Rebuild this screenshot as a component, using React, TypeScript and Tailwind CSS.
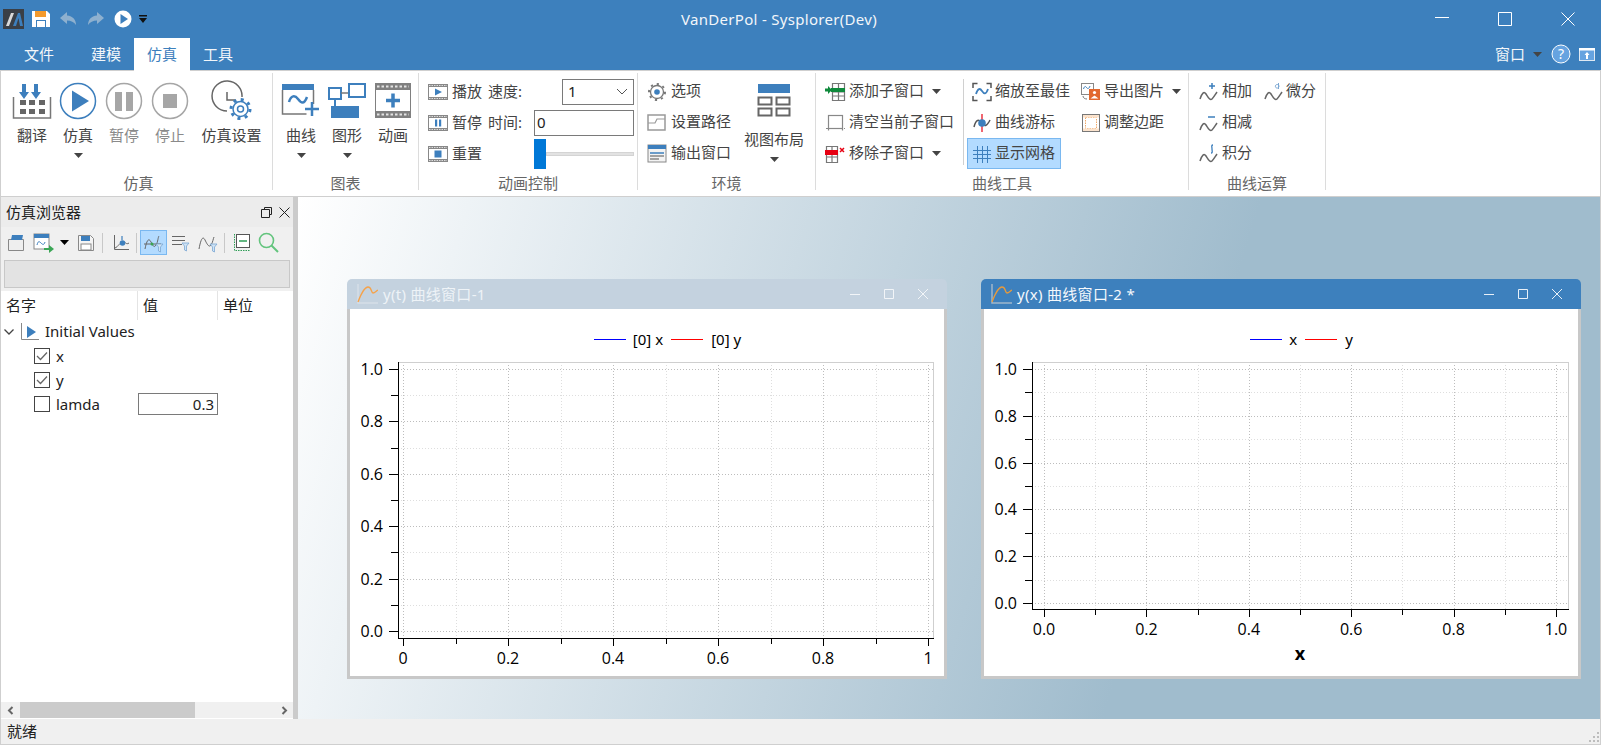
import type { ReactNode } from 'react'

const BLUE = '#3d7fbd'

function Ico({ s = 20, w, h, children }: { s?: number; w?: number; h?: number; children: ReactNode }) {
  const ww = w ?? s
  const hh = h ?? s
  return (
    <svg width={ww} height={hh} viewBox={`0 0 ${ww} ${hh}`} fill="none" className="shrink-0 block">
      {children}
    </svg>
  )
}

function Caret({ color = '#444' }: { color?: string }) {
  return (
    <svg width="9" height="5" viewBox="0 0 9 5" className="shrink-0 block">
      <path d="M0 0h9L4.5 5z" fill={color} />
    </svg>
  )
}

/* ---------- big ribbon icons ---------- */
const TranslateIcon = () => (
  <Ico s={40}>
    <path d="M1.5 16v21h37V16" stroke="#777" strokeWidth="1.5" />
    <path d="M14 3v8h3l-5 7-5-7h3V3zM26 3v8h3l-5 7-5-7h3V3z" fill={BLUE} />
    {[8, 17, 27].map((x) =>
      [19, 28].map((y) => <rect key={`${x}-${y}`} x={x} y={y} width="6" height="5" fill="#666" />),
    )}
  </Ico>
)

const PlayIcon = () => (
  <Ico s={40}>
    <circle cx="20" cy="20" r="17.5" stroke={BLUE} strokeWidth="1.5" />
    <path d="M14 9.5 31 20 14 30.5z" fill={BLUE} />
  </Ico>
)

const PauseIcon = () => (
  <Ico s={40}>
    <circle cx="20" cy="20" r="17.5" stroke="#a6a6a6" strokeWidth="1.5" />
    <rect x="11" y="11" width="7" height="19" fill="#a6a6a6" />
    <rect x="22" y="11" width="7" height="19" fill="#a6a6a6" />
  </Ico>
)

const StopIcon = () => (
  <Ico s={40}>
    <circle cx="20" cy="20" r="17.5" stroke="#a6a6a6" strokeWidth="1.5" />
    <rect x="13" y="13" width="14" height="14" fill="#a6a6a6" />
  </Ico>
)

const SimSettingsIcon = () => (
  <Ico s={42}>
    <path d="M31 17A15 15 0 1 0 16 31" stroke="#666" strokeWidth="1.5" />
    <path d="M16 12v8h8.500" stroke="#666" strokeWidth="1.5" />
    <circle cx="29.500" cy="29" r="7.500" fill="#fff" stroke={BLUE} strokeWidth="1.5" />
    <circle cx="29.500" cy="29" r="9.500" stroke={BLUE} strokeWidth="3" strokeDasharray="3 4.45" />
    <circle cx="29.500" cy="29" r="3" fill="#fff" stroke={BLUE} strokeWidth="1.5" />
  </Ico>
)

const CurveIcon = () => (
  <Ico s={40}>
    <rect x="1" y="3" width="32" height="6" fill={BLUE} />
    <path d="M1.500 9v24h24M32.500 9v14" stroke="#777" strokeWidth="1.5" />
    <path d="M8 21c2-7 6-7 9-3s6 6 9-2" stroke={BLUE} strokeWidth="2.5" />
    <path d="M31 21v14M24 28h14" stroke={BLUE} strokeWidth="2.5" />
  </Ico>
)

const ShapeIcon = () => (
  <Ico s={42}>
    <rect x="3" y="8" width="12" height="11" stroke={BLUE} strokeWidth="2" fill="#fff" />
    <rect x="23" y="4" width="16" height="13" stroke={BLUE} strokeWidth="2" fill="#fff" />
    <path d="M15 13h7" stroke="#777" strokeWidth="1.5" />
    <path d="M9 19v7" stroke={BLUE} strokeWidth="2" />
    <rect x="5" y="26" width="28" height="12" fill={BLUE} />
  </Ico>
)

const AnimIcon = () => (
  <Ico s={40}>
    <rect x="2" y="2" width="36" height="35" fill="#808080" />
    <rect x="3" y="9" width="34" height="21" fill="#fff" />
    <path d="M4 5.500h32M4 33.500h32" stroke="#e4e4e4" strokeWidth="2" strokeDasharray="2.5 2" />
    <path d="M20 12.500v14M13 19.500h14" stroke={BLUE} strokeWidth="3.5" />
  </Ico>
)

const LayoutIcon = () => (
  <Ico w={34} h={34}>
    <rect x="1" y="0" width="32" height="9" fill={BLUE} />
    <path d="M1.500 13.500h13v7h-13zM19.500 13.500h13v7h-13zM1.500 24.500h13v7h-13zM19.500 24.500h13v7h-13z" stroke="#666" strokeWidth="2" />
  </Ico>
)

/* ---------- small ribbon icons ---------- */
const Film = ({ children }: { children: ReactNode }) => (
  <Ico w={20} h={18}>
    <rect x="0" y="1" width="20" height="16" fill="#888" />
    <rect x="1" y="4" width="18" height="10" fill="#fff" />
    <path d="M1 2.500h18M1 15.500h18" stroke="#ddd" strokeWidth="1" strokeDasharray="1.5 1" />
    {children}
  </Ico>
)

const FilmPlay = () => <Film><path d="M7 5.500 14 9l-7 3.500z" fill={BLUE} /></Film>
const FilmPause = () => <Film><path d="M7 5.500h2.200v7H7zM11 5.500h2.200v7H11z" fill={BLUE} /></Film>
const FilmStop = () => <Film><rect x="6.500" y="5.500" width="7" height="7" fill={BLUE} /></Film>

const OptionIcon = () => (
  <Ico>
    <circle cx="10" cy="10" r="6.500" stroke="#777" strokeWidth="1.3" />
    <circle cx="10" cy="10" r="8" stroke="#777" strokeWidth="2" strokeDasharray="2.2 4" />
    <circle cx="10" cy="10" r="2.800" fill={BLUE} />
  </Ico>
)

const PathIcon = () => (
  <Ico>
    <rect x="1" y="2" width="17" height="15" stroke="#999" strokeWidth="1.5" />
    <path d="M1 10h7l2-4h8" stroke="#999" strokeWidth="1.2" />
  </Ico>
)

const OutputIcon = () => (
  <Ico>
    <rect x="1" y="1" width="18" height="17" fill="#f3f3f3" stroke="#888" />
    <rect x="1" y="1" width="18" height="4" fill={BLUE} />
    <path d="M3 9h14" stroke={BLUE} strokeWidth="1.5" />
    <path d="M3 12h14M3 15h9" stroke="#888" strokeWidth="1.5" />
  </Ico>
)

const AddWinIcon = () => (
  <Ico w={21} h={20}>
    <path d="M7.500 1.500h12v17h-12zM13.500 1.500v17M7.500 10h12M7.500 14h12" stroke="#777" strokeWidth="1.2" />
    <rect x="6" y="6" width="14" height="4" fill="#0f8a3c" />
    <path d="M0 6.500h3V4l4 4-4 4V9.500H0z" fill="#0f8a3c" />
  </Ico>
)

const ClearWinIcon = () => (
  <Ico w={21} h={20}>
    <rect x="3.500" y="2.500" width="14" height="13" stroke="#888" strokeWidth="1.2" />
    <path d="M1 15.500h19M3.500 15.500v3M17.500 15.500v3" stroke="#888" strokeWidth="1.2" strokeDasharray="2 1" />
  </Ico>
)

const RemoveWinIcon = () => (
  <Ico w={21} h={20}>
    <path d="M1.500 2.500h11v16h-11zM7 2.500v16M1.500 13h11" stroke="#777" strokeWidth="1.2" />
    <rect x="0" y="6" width="13" height="5" fill="#e60012" />
    <path d="m15 4 4 4m0-4-4 4" stroke="#e60012" strokeWidth="1.5" />
  </Ico>
)

const ZoomFitIcon = () => (
  <Ico>
    <path d="M1 6V1.500h4.500M14.500 1.500H19V6M19 14v4.500h-4.500M5.500 18.500H1V14" stroke="#555" strokeWidth="1.5" />
    <path d="M4 12c2-6 4-6 6-3s4 4 6-2" stroke={BLUE} strokeWidth="1.8" />
  </Ico>
)

const CursorIcon = () => (
  <Ico>
    <path d="M2 14C4 6 7 6 10 10s5 3 8-3" stroke="#555" strokeWidth="1.5" />
    <path d="M10 1v18" stroke="#e60012" strokeWidth="1.2" />
    <circle cx="10" cy="10" r="3.800" fill={BLUE} />
  </Ico>
)

const GridIcon = () => (
  <Ico>
    <path d="M5.500 2v17M10.500 2v17M15.500 2v17M1 6.500h18M1 10.500h18M1 14.500h18" stroke={BLUE} strokeWidth="1" />
  </Ico>
)

const ExportImgIcon = () => (
  <Ico>
    <rect x="0.500" y="1.500" width="12" height="11" fill="#fff" stroke="#888" />
    <path d="M2.500 7c1-3 2-3 3-1.500S8 7 9 4" stroke={BLUE} />
    <rect x="8" y="7" width="11" height="11" fill="#e2682f" />
    <circle cx="13.500" cy="10.500" r="1.600" fill="#fff" />
    <path d="M9.500 16.500h8l-4-3z" fill="#fff" />
    <path d="M2 14c0 2 2 3 4 3" stroke="#777" />
  </Ico>
)

const MarginIcon = () => (
  <Ico>
    <rect x="1.500" y="1.500" width="17" height="17" stroke="#777" />
    <rect x="4.500" y="4.500" width="11" height="11" stroke="#f0a868" strokeDasharray="1.5 1" />
    <rect x="2" y="2" width="16" height="2.500" fill="#fbe3cd" />
    <rect x="2" y="15.500" width="16" height="2.500" fill="#fbe3cd" />
  </Ico>
)

const Wave = ({ mark }: { mark: ReactNode }) => (
  <Ico>
    <path d="M1 17c2-6 4-8 6-5s4 7 6 5 3-4 5-7" stroke="#666" strokeWidth="1.5" />
    {mark}
  </Ico>
)

const AddOp = () => <Wave mark={<path d="M10 4h6M13 1v6" stroke={BLUE} strokeWidth="1.5" />} />
const SubOp = () => <Wave mark={<path d="M9 4h7" stroke={BLUE} strokeWidth="1.5" />} />
const IntOp = () => <Wave mark={<path d="M14 1c-2 0-1 2-1 4s1 4-1 4" stroke={BLUE} strokeWidth="1.3" />} />
const DiffOp = () => (
  <Wave mark={<path d="M14.500 1v6M14.500 5.500a1.800 1.800 0 1 0-.1.1" stroke="#7ba7d3" strokeWidth="1" />} />
)

/* ---------- ribbon parts ---------- */
function BigBtn({ icon, label, wide, caret, muted }: { icon: ReactNode; label: string; wide?: boolean; caret?: boolean; muted?: boolean }) {
  return (
    <div className={`flex flex-col items-center pt-[9px] ${wide ? 'w-[77px]' : 'w-[46px]'}`}>
      <div className="h-[42px] flex items-center justify-center">{icon}</div>
      <div className={`h-[20px] mt-[3px] leading-[20px] whitespace-nowrap ${muted ? 'text-[#8a8a8a]' : 'text-[#444]'}`}>{label}</div>
      {caret && <div className="mt-[8px]"><Caret /></div>}
    </div>
  )
}

function Group({ label, width, labelClass, children }: { label: string; width: string; labelClass?: string; children: ReactNode }) {
  return (
    <div className={`relative flex flex-col h-full shrink-0 ${width}`}>
      <div className="flex-1 min-h-0 flex">{children}</div>
      <div className={`h-[24px] leading-[22px] text-center text-[#666] ${labelClass ?? 'pr-[1px]'}`}>{label}</div>
      <div className="absolute right-0 top-[2px] bottom-[6px] w-px bg-[#dcdcdc]" />
    </div>
  )
}

function SmallBtn({ icon, label, caretGap, active, iconGap = 3, w }: { icon: ReactNode; label: string; caretGap?: string; active?: boolean; iconGap?: number; w?: string }) {
  return (
    <div className={`h-[31px] flex items-center whitespace-nowrap text-[#444] ${active ? 'bg-[#b3dbff] border border-[#7ab8f0] pl-[4px]' : ''} ${w ?? ''}`}>
      {icon}
      <span className="mb-[2px]" style={{ marginLeft: iconGap }}>{label}</span>
      {caretGap && <span className={caretGap}><Caret /></span>}
    </div>
  )
}

/* ---------- chart ---------- */
type ChartCfg = {
  vb: string
  axL: number
  axT: number
  axB: number
  axR: number
  x0: number
  xk: number
  y0: number
  yk: number
  xLabels: string[]
}

function Chart({ cfg, xTitle }: { cfg: ChartCfg; xTitle?: string }) {
  const { axL, axT, axB, axR, x0, xk, y0, yk, xLabels } = cfg
  const tenths = [0, 1, 2, 3, 4, 5, 6, 7, 8, 9, 10]
  return (
    <svg width="594" height="367" viewBox={cfg.vb} className="block" fontFamily="'Open Sans', sans-serif">
      {tenths.map((t) => {
        const major = t % 2 === 0
        const x = Math.round(x0 + (t / 10) * xk) + 0.5
        const y = Math.round(y0 - (t / 10) * yk) + 0.5
        const stroke = major ? '#bdbdbd' : '#dedede'
        return (
          <g key={t} shapeRendering="crispEdges">
            <line x1={x} x2={x} y1={axT} y2={axB} stroke={stroke} strokeDasharray="1 2" />
            <line x1={axL} x2={axR} y1={y} y2={y} stroke={stroke} strokeDasharray="1 2" />
            <line x1={x} x2={x} y1={axB} y2={axB + (major ? 8 : 6)} stroke="#000" />
            <line x1={axL - (major ? 9 : 7)} x2={axL} y1={y} y2={y} stroke="#000" />
          </g>
        )
      })}
      <g shapeRendering="crispEdges">
        <line x1={axL} x2={axR} y1={axT + 0.5} y2={axT + 0.5} stroke="#cfcfcf" />
        <line x1={axR + 0.5} x2={axR + 0.5} y1={axT} y2={axB} stroke="#cfcfcf" />
        <line x1={axL + 0.5} x2={axL + 0.5} y1={axT} y2={axB + 1} stroke="#000" />
        <line x1={axL} x2={axR + 1} y1={axB + 0.5} y2={axB + 0.5} stroke="#000" />
      </g>
      {['0.0', '0.2', '0.4', '0.6', '0.8', '1.0'].map((t) => (
        <text key={t} x={axL - 15} y={y0 - parseFloat(t) * yk + 6} textAnchor="end" fontSize="16" fill="#000">{t}</text>
      ))}
      {xLabels.map((t, i) => (
        <text key={t} x={x0 + (i / 5) * xk} y={axB + 26} textAnchor="middle" fontSize="16" fill="#000">{t}</text>
      ))}
      {xTitle && (
        <text x={x0 + 0.5 * xk} y={660} textAnchor="middle" fontSize="18" fontWeight="700" fill="#000">{xTitle}</text>
      )}
    </svg>
  )
}

function PlotWindow({ left, active, title, legend, cfg, xTitle }: { left: string; active?: boolean; title: string; legend: { x: string; y: string }; cfg: ChartCfg; xTitle?: string }) {
  const stroke = active ? '#e8f0f8' : '#f2f5f8'
  return (
    <div className={`absolute top-[82px] w-[600px] h-[400px] flex flex-col ${left}`}>
      <div className={`h-[30px] rounded-t-[5px] flex items-center pl-[10px] shrink-0 ${active ? 'bg-[#3d80bd]' : 'bg-[#c4d2df]'}`}>
        <Ico w={21} h={20}>
          <path d="M1 0v19h20" stroke={active ? '#9fb6cc' : '#d5dee7'} strokeWidth="1.5" />
          <path d="M1 18C4 10 7 3 11 3s3 6 5 6 3-2 5-3" stroke={active ? '#e79a3c' : '#f5a24a'} strokeWidth="1.3" />
        </Ico>
        <span className={`ml-[5px] tracking-[0.3px] ${active ? 'text-[#f4f8fc]' : 'text-[#eef3f7]'}`}>{title}</span>
        <div className="ml-auto flex items-center pr-[18px] gap-[22px]">
          <svg width="12" height="12" viewBox="0 0 12 12" fill="none"><path d="M1 6.500h10" stroke={stroke} /></svg>
          <svg width="12" height="12" viewBox="0 0 12 12" fill="none"><path d="M1.500 1.500h9v9h-9z" stroke={stroke} /></svg>
          <svg width="12" height="12" viewBox="0 0 12 12" fill="none"><path d="m1 1 10 10m0-10L1 11" stroke={stroke} /></svg>
        </div>
      </div>
      <div className="flex-1 min-h-0 border-[3px] border-t-0 border-[#c8c8c8] bg-white flex flex-col relative">
        <div className="absolute top-[20px] left-0 right-0 pl-[41px] flex justify-center items-center text-black z-10 h-[20px]">
          <span className="w-[32px] h-[1px] bg-[#0000ff]" />
          <span className="ml-[7px] mr-[8px]">{legend.x}</span>
          <span className="w-[32px] h-[1px] bg-[#ff0000]" />
          <span className="ml-[8px]">{legend.y}</span>
        </div>
        <Chart cfg={cfg} xTitle={xTitle} />
      </div>
    </div>
  )
}

const chart1: ChartCfg = {
  vb: '350 309 594 367', axL: 398, axT: 362, axB: 638, axR: 933, x0: 403, xk: 525, y0: 631, yk: 262,
  xLabels: ['0', '0.2', '0.4', '0.6', '0.8', '1'],
}
const chart2: ChartCfg = {
  vb: '984 309 594 367', axL: 1032, axT: 362, axB: 609, axR: 1568, x0: 1044, xk: 512, y0: 603, yk: 234,
  xLabels: ['0.0', '0.2', '0.4', '0.6', '0.8', '1.0'],
}

/* ---------- left panel ---------- */
const Sep = () => <div className="w-px h-[20px] bg-[#c8c8c8] shrink-0" />

function FilterMark() {
  return <path d="M12 11h7l-2.500 3v5l-2-1v-4z" fill="#cfe3f5" stroke="#7ba7d3" strokeWidth=".8" />
}

function BrowserToolbar() {
  return (
    <div className="h-[31px] flex items-center pl-[6px] bg-[#f0f0f0] shrink-0">
      <Ico w={18} h={18}>
        <path d="M1.500 5.500h15v11h-15z" stroke="#888" fill="#eee" />
        <path d="M4 6 5 1h11l-1 5z" fill={BLUE} />
      </Ico>
      <div className="ml-[8px]">
        <Ico w={21} h={20}>
          <rect x="1" y="1" width="15" height="15" fill="#fff" stroke="#888" />
          <rect x="1" y="1" width="15" height="4" fill={BLUE} />
          <path d="M4 12c1-4 2-4 4-2s3 2 4-1" stroke={BLUE} />
          <path d="M11 15h5v-3l5 4-5 4v-3h-5z" fill="#3aa655" />
        </Ico>
      </div>
      <div className="ml-[6px]"><Caret color="#000" /></div>
      <div className="ml-[8px]">
        <Ico w={18} h={18}>
          <path d="M1.500 1.500h12l3 3v12h-15z" fill="#f4f4f4" stroke="#888" />
          <rect x="4" y="2" width="9" height="5" fill={BLUE} />
          <rect x="4" y="10" width="10" height="6" fill="#fff" stroke="#888" />
        </Ico>
      </div>
      <div className="ml-[7px]"><Sep /></div>
      <div className="ml-[8px]">
        <Ico w={18} h={18}>
          <path d="M3.500 1v14.500H18" stroke="#666" />
          <path d="M4 14c3-1 5-6 8-6s3 3 6 1" stroke="#666" />
          <path d="M11 2v4" stroke={BLUE} strokeWidth="1.2" />
          <circle cx="11.500" cy="9" r="2.800" fill={BLUE} />
        </Ico>
      </div>
      <div className="ml-[7px]"><Sep /></div>
      <div className="ml-[3px] w-[27px] h-[25px] bg-[#b3dbff] border border-[#7ab8f0] flex items-center justify-center shrink-0">
        <Ico w={20} h={20}>
          <path d="M1 16C3 6 5 5 7 9s3 6 5 3 2-8 3-9" stroke="#666" />
          <path d="M0 11h17" stroke="#666" />
          <circle cx="8" cy="11" r="1.500" fill="#3aa655" />
          <FilterMark />
        </Ico>
      </div>
      <div className="ml-[5px]">
        <Ico w={18} h={20}>
          <path d="M0 3.500h13M0 7.500h13M0 11.500h10" stroke="#666" />
          <g transform="translate(-2 -1)"><FilterMark /></g>
        </Ico>
      </div>
      <div className="ml-[8px]">
        <Ico w={20} h={20}>
          <path d="M1 16C3 5 5 3 7 7s4 8 6 5 2-6 3-8" stroke="#666" />
          <FilterMark />
        </Ico>
      </div>
      <div className="ml-[6px]"><Sep /></div>
      <div className="ml-[8px]">
        <Ico w={18} h={19}>
          <path d="M1.500 1v16.500H17" stroke="#2f9e57" strokeDasharray="1.5 1" />
          <rect x="3.500" y="1.500" width="13" height="13" fill="#fff" stroke="#555" />
          <path d="M6 8h8" stroke="#2f9e57" strokeWidth="1.5" />
        </Ico>
      </div>
      <div className="ml-[7px]">
        <Ico w={21} h={21}>
          <circle cx="8.500" cy="8.500" r="7" stroke="#63c47d" strokeWidth="1.6" />
          <path d="m13.500 13.500 6.500 6.500" stroke="#63c47d" strokeWidth="2" />
        </Ico>
      </div>
    </div>
  )
}

function CheckBox({ checked }: { checked?: boolean }) {
  return (
    <div className="w-[16px] h-[16px] border border-[#444] bg-white flex items-center justify-center shrink-0">
      {checked && (
        <svg width="12" height="10" viewBox="0 0 12 10" fill="none"><path d="m1 5 3.500 3.500L11 1.500" stroke="#666" strokeWidth="1.3" /></svg>
      )}
    </div>
  )
}

function VarRow({ name, checked, value }: { name: string; checked?: boolean; value?: string }) {
  return (
    <div className="h-[24px] flex items-center pl-[33px] relative">
      <CheckBox checked={checked} />
      <span className="ml-[6px] text-[#222]">{name}</span>
      {value && (
        <div className="absolute left-[137px] top-[1px] w-[80px] h-[22px] border border-[#7a7a7a] bg-white text-right pr-[3px] leading-[20px] text-[#222]">
          {value}
        </div>
      )}
    </div>
  )
}

function BrowserPanel() {
  return (
    <div className="w-[292px] flex flex-col shrink-0 bg-white">
      <div className="h-[30px] bg-[#ececec] flex items-center pl-[5px] pr-[3px] shrink-0 text-[#222]">
        <span>仿真浏览器</span>
        <div className="ml-auto flex items-center gap-[7px]">
          <svg width="11" height="11" viewBox="0 0 11 11" fill="none"><path d="M3.500 2.500v-2h7v7h-2M.5 2.500h8v8h-8z" stroke="#222" /></svg>
          <svg width="11" height="11" viewBox="0 0 11 11" fill="none"><path d="m.5.500 10 10m0-10-10 10" stroke="#222" /></svg>
        </div>
      </div>
      <BrowserToolbar />
      <div className="h-[33px] bg-[#f0f0f0] px-[3px] pt-[2px] shrink-0">
        <div className="h-[28px] bg-[#e3e3e3] border border-[#c8c8c8]" />
      </div>
      <div className="h-[29px] flex items-center text-[#222] shrink-0">
        <div className="w-[137px] pl-[5px] border-r border-[#e4e4e4] h-full flex items-center">名字</div>
        <div className="w-[80px] pl-[5px] border-r border-[#e4e4e4] h-full flex items-center">值</div>
        <div className="pl-[5px] h-full flex items-center">单位</div>
      </div>
      <div className="flex-1 min-h-0 -mt-[1px]">
        <div className="h-[25px] flex items-center pl-[3px]">
          <svg width="10" height="6" viewBox="0 0 10 6" fill="none"><path d="m.5.500 4.500 4.500L9.500.500" stroke="#444" strokeWidth="1.3" /></svg>
          <div className="ml-[7px]">
            <Ico w={18} h={18}>
              <path d="M.5 0v16.500H18" stroke="#888" />
              <path d="M6 3l9 6-9 6z" fill={BLUE} />
            </Ico>
          </div>
          <span className="ml-[6px] text-[#222]">Initial Values</span>
        </div>
        <VarRow name="x" checked />
        <VarRow name="y" checked />
        <VarRow name="lamda" value="0.3" />
      </div>
      <div className="h-[16px] bg-[#f0f0f0] flex items-center shrink-0 mb-[1px]">
        <div className="w-[19px] flex justify-center">
          <svg width="7" height="9" viewBox="0 0 7 9" fill="none"><path d="M5.500 1 2 4.500 5.500 8" stroke="#666" strokeWidth="2" /></svg>
        </div>
        <div className="w-[175px] h-full bg-[#cbcbcb]" />
        <div className="ml-auto w-[18px] flex justify-center">
          <svg width="7" height="9" viewBox="0 0 7 9" fill="none"><path d="M1.500 1 5 4.500 1.500 8" stroke="#666" strokeWidth="2" /></svg>
        </div>
      </div>
    </div>
  )
}

/* ---------- page ---------- */
export default function App() {
  return (
    <div className="w-[1601px] h-[745px] flex flex-col overflow-hidden bg-white text-[15px] leading-none [font-family:'Noto_Sans','Noto_Sans_CJK_SC',sans-serif]">
      {/* Title bar */}
      <div className="h-[38px] bg-[#3d80bd] flex items-center shrink-0 text-white">
        <div className="w-[681px] flex items-center pl-[3px] shrink-0">
          <svg width="21" height="20" viewBox="0 0 21 20" className="block">
            <rect width="21" height="20" fill="#3a3f46" />
            <path d="M3 17 8 4h3L6 17z" fill="#d9d9d9" />
            <path d="M10 17 15 4h2l3 13h-3l-1.500-8L13 17z" fill={BLUE} />
          </svg>
          <div className="ml-[7px]">
            <Ico w={20} h={18}>
              <path d="M1 1h15l3 3v13H1z" fill="#fff" />
              <rect x="4" y="1" width="11" height="6" fill="#f39a2d" />
              <rect x="5" y="10" width="10" height="7" fill="#3d80bd" />
              <rect x="6" y="11" width="8" height="6" fill="#fff" />
            </Ico>
          </div>
          <div className="ml-[8px]">
            <Ico w={19} h={16}>
              <path d="M8 1 1 7l7 6V9.500c4 0 7 1.500 9 4.500 0-5-3-9-9-9.500z" fill="#8eb0cf" />
            </Ico>
          </div>
          <div className="ml-[8px]">
            <Ico w={19} h={16}>
              <path d="m11 1 7 6-7 6V9.500c-4 0-7 1.500-9 4.500 0-5 3-9 9-9.500z" fill="#8eb0cf" />
            </Ico>
          </div>
          <div className="ml-[9px]">
            <Ico w={18} h={18}>
              <circle cx="9" cy="9" r="8.500" fill="#fff" />
              <path d="M6.500 4 14 9l-7.500 5z" fill={BLUE} />
            </Ico>
          </div>
          <div className="ml-[6px]">
            <svg width="10" height="10" viewBox="0 0 10 10" className="block"><path d="M1 1h8v1.500H1zM1 4h8L5 9z" fill="#111" /></svg>
          </div>
        </div>
        <span className="text-[#f2f6fa] tracking-[0.3px]">VanDerPol - Sysplorer(Dev)</span>
        <div className="ml-auto flex items-center">
          <svg width="14" height="14" viewBox="0 0 14 14" fill="none" className="mr-[49px]"><path d="M0 5.500h14" stroke="#fff" /></svg>
          <svg width="14" height="14" viewBox="0 0 14 14" fill="none" className="mr-[49px]"><path d="M.5.500h13v13H.5z" stroke="#fff" /></svg>
          <svg width="14" height="14" viewBox="0 0 14 14" fill="none" className="mr-[26px]"><path d="m.5.500 13 13m0-13-13 13" stroke="#fff" /></svg>
        </div>
      </div>

      {/* Tabs */}
      <div className="h-[32px] bg-[#3d80bd] flex items-stretch shrink-0 text-[#f2f6fa]">
        <div className="ml-[11px] w-[56px] flex items-center justify-center">文件</div>
        <div className="ml-[11px] w-[56px] flex items-center justify-center">建模</div>
        <div className="w-[56px] flex items-center justify-center bg-white text-[#3d80bd] h-[33px] relative z-10">仿真</div>
        <div className="w-[56px] flex items-center justify-center">工具</div>
        <div className="ml-auto flex items-center">
          <span>窗口</span>
          <div className="ml-[8px]"><Caret /></div>
          <svg width="20" height="20" viewBox="0 0 20 20" className="ml-[9px]">
            <circle cx="10" cy="10" r="9" fill="#66a3e0" stroke="#fff" />
            <text x="10" y="15" textAnchor="middle" fontSize="14" fill="#fff">?</text>
          </svg>
          <svg width="16" height="13" viewBox="0 0 16 13" className="ml-[8px] mr-[6px]">
            <rect x=".5" y=".5" width="15" height="12" fill="#66a3e0" stroke="#dfe9f3" />
            <rect x="0" y="0" width="16" height="2.500" fill="#fff" />
            <path d="M8 4 5.500 7H7v4h2V7h1.500z" fill="#fff" />
          </svg>
        </div>
      </div>

      {/* Ribbon */}
      <div className="h-[127px] border-y border-[#cfcfcf] border-l border-r flex shrink-0 text-[15px]">
        <Group label="仿真" width="w-[272px]" labelClass="pl-[3px]">
          <div className="flex pl-[8px]">
            <BigBtn icon={<TranslateIcon />} label="翻译" />
            <BigBtn icon={<PlayIcon />} label="仿真" caret />
            <BigBtn icon={<PauseIcon />} label="暂停" muted />
            <BigBtn icon={<StopIcon />} label="停止" muted />
            <BigBtn icon={<SimSettingsIcon />} label="仿真设置" wide />
          </div>
        </Group>
        <Group label="图表" width="w-[146px]">
          <div className="flex pl-[5px]">
            <BigBtn icon={<CurveIcon />} label="曲线" caret />
            <BigBtn icon={<ShapeIcon />} label="图形" caret />
            <BigBtn icon={<AnimIcon />} label="动画" />
          </div>
        </Group>
        <Group label="动画控制" width="w-[219px]">
          <div className="flex flex-col w-full pt-[5px] pl-[9px] pr-[4px] text-[#444]">
            <div className="h-[31px] flex items-center">
              <FilmPlay />
              <span className="ml-[4px] w-[30px] mb-[1px]">播放</span>
              <span className="ml-[6px] mb-[1px]">速度:</span>
              <div className="ml-auto w-[72px] h-[26px] border border-[#7a7a7a] flex items-center pl-[5px] pr-[5px] text-[#222]">
                <span>1</span>
                <svg width="12" height="7" viewBox="0 0 12 7" fill="none" className="ml-auto"><path d="m1 1 5 5 5-5" stroke="#555" /></svg>
              </div>
            </div>
            <div className="h-[31px] flex items-center">
              <FilmPause />
              <span className="ml-[4px] w-[30px] mb-[1px]">暂停</span>
              <span className="ml-[6px] mb-[1px]">时间:</span>
              <div className="ml-auto w-[100px] h-[26px] border border-[#7a7a7a] flex items-center pl-[2px] text-[#222]">0</div>
            </div>
            <div className="h-[31px] flex items-center">
              <FilmStop />
              <span className="ml-[4px] mb-[1px]">重置</span>
              <div className="ml-auto w-[100px] h-[30px] flex items-center">
                <div className="w-[12px] h-[30px] bg-[#0078d7] shrink-0" />
                <div className="flex-1 h-[4px] bg-[#e2e2e2] border border-[#d4d4d4]" />
              </div>
            </div>
          </div>
        </Group>
        <Group label="环境" width="w-[178px]">
          <div className="flex flex-col pt-[5px] pl-[9px] w-[110px] shrink-0">
            <SmallBtn icon={<OptionIcon />} label="选项" iconGap={4} />
            <SmallBtn icon={<PathIcon />} label="设置路径" iconGap={4} />
            <SmallBtn icon={<OutputIcon />} label="输出窗口" iconGap={4} />
          </div>
          <div className="flex flex-col items-center pt-[13px] w-[52px] shrink-0 text-[#444]">
            <LayoutIcon />
            <div className="mt-[11px] leading-[20px] whitespace-nowrap">视图布局</div>
            <div className="mt-[8px]"><Caret /></div>
          </div>
        </Group>
        <Group label="曲线工具" width="w-[373px]">
          <div className="flex flex-col pt-[5px] pl-[9px] w-[148px] shrink-0 relative">
            <SmallBtn icon={<AddWinIcon />} label="添加子窗口" caretGap="ml-[8px]" />
            <SmallBtn icon={<ClearWinIcon />} label="清空当前子窗口" />
            <SmallBtn icon={<RemoveWinIcon />} label="移除子窗口" caretGap="ml-[8px]" />
            <div className="absolute right-0 top-[8px] h-[86px] w-px bg-[#d0d0d0]" />
          </div>
          <div className="flex flex-col pt-[5px] pl-[3px] w-[117px] shrink-0">
            <div className="pl-[5px]"><SmallBtn icon={<ZoomFitIcon />} label="缩放至最佳" /></div>
            <div className="pl-[5px]"><SmallBtn icon={<CursorIcon />} label="曲线游标" /></div>
            <SmallBtn icon={<GridIcon />} label="显示网格" active w="w-[94px]" />
          </div>
          <div className="flex flex-col pt-[5px] shrink-0">
            <SmallBtn icon={<ExportImgIcon />} label="导出图片" caretGap="ml-[8px]" />
            <SmallBtn icon={<MarginIcon />} label="调整边距" />
          </div>
        </Group>
        <Group label="曲线运算" width="w-[137px]">
          <div className="flex flex-col pt-[5px] pl-[10px] w-[75px] shrink-0">
            <SmallBtn icon={<AddOp />} label="相加" />
            <SmallBtn icon={<SubOp />} label="相减" />
            <SmallBtn icon={<IntOp />} label="积分" />
          </div>
          <div className="flex flex-col pt-[5px]">
            <SmallBtn icon={<DiffOp />} label="微分" iconGap={2} />
          </div>
        </Group>
      </div>

      {/* Body */}
      <div className="flex-1 min-h-0 flex border-x border-[#cfcfcf]">
        <BrowserPanel />
        <div className="w-[5px] bg-[#cbcbcb] shrink-0" />
        <div className="flex-1 relative bg-[linear-gradient(107deg,#ffffff_0%,#a0bccd_66%)]">
          <PlotWindow
            left="left-[49px]"
            title="y(t) 曲线窗口-1"
            legend={{ x: '[0] x', y: '[0] y' }}
            cfg={chart1}
          />
          <PlotWindow
            left="left-[683px]"
            active
            title="y(x) 曲线窗口-2 *"
            legend={{ x: 'x', y: 'y' }}
            cfg={chart2}
            xTitle="x"
          />
        </div>
      </div>

      {/* Status bar */}
      <div className="h-[26px] bg-[#f0f0f0] border-b border-x border-[#cfcfcf] flex items-center pl-[6px] shrink-0 text-[#222] relative">
        <span>就绪</span>
        <svg width="12" height="12" viewBox="0 0 12 12" className="absolute right-0 bottom-[1px]">
          <path d="M9 1h2v2H9zM9 5h2v2H9zM5 5h2v2H5zM9 9h2v2H9zM5 9h2v2H5zM1 9h2v2H1z" fill="#bdbdbd" />
        </svg>
      </div>
    </div>
  )
}
